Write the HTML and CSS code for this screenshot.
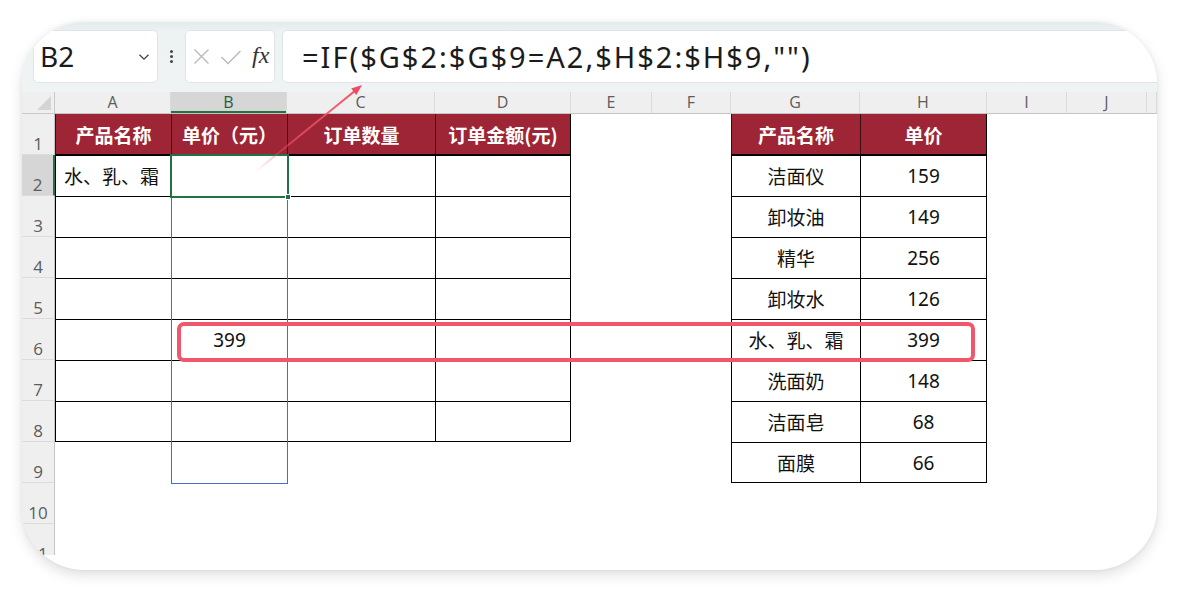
FILE: index.html
```html
<!DOCTYPE html>
<html lang="zh-CN">
<head>
<meta charset="utf-8">
<title>IF 数组公式</title>
<link rel="stylesheet" href="styles.css">
</head>
<body>
<div class="card">
  <div class="toolbar">
    <div class="namebox">
      <span class="nb-text">B2</span>
      <svg class="chev" width="12" height="8" viewBox="0 0 12 8"><path d="M1.5 1.8 L6 6.2 L10.5 1.8" fill="none" stroke="#444" stroke-width="1.3"/></svg>
    </div>
    <div class="dots"><i></i><i></i><i></i></div>
    <div class="fxbox">
      <svg width="17" height="17" viewBox="0 0 17 17"><path d="M1.5 1.5 L15.5 15.5 M15.5 1.5 L1.5 15.5" stroke="#b9b9b9" stroke-width="1.4" fill="none"/></svg>
      <svg width="22" height="18" viewBox="0 0 22 18"><path d="M1.5 9 L8 15.5 L20.5 3" stroke="#b9b9b9" stroke-width="1.4" fill="none"/></svg>
      <span class="fx">fx</span>
    </div>
    <div class="formula">=IF($G$2:$G$9=A2,$H$2:$H$9,"")</div>
  </div>

  <div class="sheet">
    <div class="grid">
      <!-- column headers -->
      <div class="corner"><svg width="14" height="14" viewBox="0 0 14 14"><path d="M14 0 L14 14 L0 14 Z" fill="#d4d4d4"/></svg></div>
      <div class="ch">A</div><div class="ch sel">B</div><div class="ch">C</div><div class="ch">D</div><div class="ch">E</div><div class="ch">F</div><div class="ch">G</div><div class="ch">H</div><div class="ch">I</div><div class="ch">J</div><div class="ch"></div>

      <!-- row 1 -->
      <div class="rh">1</div>
      <div class="c hd">产品名称</div><div class="c hd">单价（元）</div><div class="c hd">订单数量</div><div class="c hd tr">订单金额(元)</div>
      <div class="c"></div><div class="c"></div>
      <div class="c hd">产品名称</div><div class="c hd tr">单价</div>
      <div class="c"></div><div class="c"></div><div class="c"></div>

      <!-- row 2 -->
      <div class="rh on">2</div>
      <div class="c tb lt">水、乳、霜</div><div class="c tb"></div><div class="c tb"></div><div class="c tb tr"></div>
      <div class="c"></div><div class="c"></div>
      <div class="c tb">洁面仪</div><div class="c tb tr">159</div>
      <div class="c"></div><div class="c"></div><div class="c"></div>

      <!-- row 3 -->
      <div class="rh">3</div>
      <div class="c tb"></div><div class="c tb"></div><div class="c tb"></div><div class="c tb tr"></div>
      <div class="c"></div><div class="c"></div>
      <div class="c tb">卸妆油</div><div class="c tb tr">149</div>
      <div class="c"></div><div class="c"></div><div class="c"></div>

      <!-- row 4 -->
      <div class="rh">4</div>
      <div class="c tb"></div><div class="c tb"></div><div class="c tb"></div><div class="c tb tr"></div>
      <div class="c"></div><div class="c"></div>
      <div class="c tb">精华</div><div class="c tb tr">256</div>
      <div class="c"></div><div class="c"></div><div class="c"></div>

      <!-- row 5 -->
      <div class="rh">5</div>
      <div class="c tb"></div><div class="c tb"></div><div class="c tb"></div><div class="c tb tr"></div>
      <div class="c"></div><div class="c"></div>
      <div class="c tb">卸妆水</div><div class="c tb tr">126</div>
      <div class="c"></div><div class="c"></div><div class="c"></div>

      <!-- row 6 -->
      <div class="rh">6</div>
      <div class="c tb"></div><div class="c tb">399</div><div class="c tb"></div><div class="c tb tr"></div>
      <div class="c"></div><div class="c"></div>
      <div class="c tb">水、乳、霜</div><div class="c tb tr">399</div>
      <div class="c"></div><div class="c"></div><div class="c"></div>

      <!-- row 7 -->
      <div class="rh">7</div>
      <div class="c tb"></div><div class="c tb"></div><div class="c tb"></div><div class="c tb tr"></div>
      <div class="c"></div><div class="c"></div>
      <div class="c tb">洗面奶</div><div class="c tb tr">148</div>
      <div class="c"></div><div class="c"></div><div class="c"></div>

      <!-- row 8 -->
      <div class="rh">8</div>
      <div class="c tb bb"></div><div class="c tb bb"></div><div class="c tb bb"></div><div class="c tb tr bb"></div>
      <div class="c"></div><div class="c"></div>
      <div class="c tb">洁面皂</div><div class="c tb tr">68</div>
      <div class="c"></div><div class="c"></div><div class="c"></div>

      <!-- row 9 -->
      <div class="rh">9</div>
      <div class="c"></div><div class="c"></div><div class="c"></div><div class="c"></div>
      <div class="c"></div><div class="c"></div>
      <div class="c tb bb">面膜</div><div class="c tb tr bb">66</div>
      <div class="c"></div><div class="c"></div><div class="c"></div>

      <!-- row 10 -->
      <div class="rh">10</div>
      <div class="c"></div><div class="c"></div><div class="c"></div><div class="c"></div><div class="c"></div><div class="c"></div><div class="c"></div><div class="c"></div><div class="c"></div><div class="c"></div><div class="c"></div>

      <!-- row 11 -->
      <div class="rh">11</div>
      <div class="c"></div><div class="c"></div><div class="c"></div><div class="c"></div><div class="c"></div><div class="c"></div><div class="c"></div><div class="c"></div><div class="c"></div><div class="c"></div><div class="c"></div>
    </div>

    <div class="range"></div>
    <div class="active"></div>
    <div class="handle"></div>
    <div class="mark"></div>
  </div>

  <svg class="arrow" width="1135" height="548" viewBox="0 0 1135 548">
    <defs>
      <linearGradient id="ag" gradientUnits="userSpaceOnUse" x1="233" y1="150" x2="338" y2="65">
        <stop offset="0" stop-color="#f0566a" stop-opacity="0"/>
        <stop offset="0.45" stop-color="#f0566a" stop-opacity="0.75"/>
        <stop offset="1" stop-color="#ef4a60" stop-opacity="1"/>
      </linearGradient>
    </defs>
    <line x1="233" y1="150" x2="334" y2="68" stroke="url(#ag)" stroke-width="2"/>
    <path d="M340 63 L329.2 66.6 L334.3 72.9 Z" fill="#ef4a60"/>
  </svg>
</div>
</body>
</html>
```

FILE: styles.css
```css
* { box-sizing: border-box; }

html, body {
  margin: 0;
  padding: 0;
  background: #ffffff;
}

body {
  width: 1179px;
  height: 592px;
  overflow: hidden;
  font-family: "Noto Sans", "Noto Sans CJK SC", sans-serif;
}

.card {
  position: relative;
  margin: 22px 0 0 22px;
  width: 1135px;
  height: 548px;
  border-radius: 62px;
  overflow: hidden;
  background: #ffffff;
  box-shadow: 0 5px 14px rgba(0, 0, 0, 0.13), 0 0 4px rgba(0, 0, 0, 0.05);
}

/* ---------- formula toolbar ---------- */
.toolbar {
  height: 70px;
  display: flex;
  align-items: flex-start;
  padding: 8px 0 0 11px;
  background: linear-gradient(#e3ebed 0px, #edf2f3 10px, #eff3f3 100%);
}

.namebox {
  width: 125px;
  height: 53px;
  flex: none;
  background: #fff;
  border: 1px solid #dfe4e6;
  border-radius: 5px;
  display: flex;
  align-items: center;
  padding-left: 6px;
}

.nb-text {
  font-family: "Noto Sans", sans-serif;
  font-size: 28px;
  color: #1b1b1b;
  line-height: 38px;
  margin-top: -2px;
}

.chev {
  margin-left: auto;
  margin-right: 7px;
}

.dots {
  width: 27px;
  height: 53px;
  flex: none;
  display: flex;
  flex-direction: column;
  align-items: center;
  justify-content: center;
  gap: 2px;
}

.dots i {
  display: block;
  width: 3px;
  height: 3px;
  border-radius: 50%;
  background: #4a4a4a;
}

.fxbox {
  width: 90px;
  height: 53px;
  flex: none;
  background: #fff;
  border: 1px solid #dfe4e6;
  border-radius: 5px;
  display: flex;
  align-items: center;
  padding-left: 7px;
  gap: 10px;
}

.fx {
  font-family: "Liberation Serif", serif;
  font-style: italic;
  font-size: 24px;
  color: #333;
  margin-top: -3px;
}

.formula {
  flex: none;
  width: 900px;
  height: 53px;
  margin-left: 7px;
  background: #fff;
  border: 1px solid #dfe4e6;
  border-radius: 5px;
  padding-left: 19px;
  display: flex;
  align-items: center;
  font-family: "Noto Sans", sans-serif;
  font-size: 29px;
  letter-spacing: 2px;
  color: #1b1b1b;
  white-space: nowrap;
}

/* ---------- sheet ---------- */
.sheet {
  position: relative;
  height: 463px;
  overflow: hidden;
}

.grid {
  display: grid;
  grid-template-columns: 33px 116px 116px 148px 136px 81px 79px 129px 127px 80px 80px 1fr;
  grid-template-rows: 22px repeat(11, 41px);
}

.corner {
  background: #efefef;
  border-right: 1px solid #c9c9c9;
  border-bottom: 1px solid #c9c9c9;
  display: flex;
  align-items: flex-end;
  justify-content: flex-end;
  padding: 0 3px 3px 0;
}

.ch {
  background: #efefef;
  border-right: 1px solid #dadada;
  border-bottom: 1px solid #c4c4c4;
  display: flex;
  align-items: center;
  justify-content: center;
  font-family: "Open Sans", sans-serif;
  font-size: 16px;
  color: #5c5c5c;
  line-height: 21px;
}

.ch.sel {
  background: #d6d6d6;
  box-shadow: inset 0 -2px 0 #217346;
  color: #2d5a3e;
}

.rh {
  background: #efefef;
  border-right: 1px solid #c4c4c4;
  border-bottom: 1px solid #dcdcdc;
  display: flex;
  align-items: flex-end;
  justify-content: center;
  font-family: "Open Sans", sans-serif;
  font-size: 17px;
  color: #5c5c5c;
  line-height: 20px;
  padding-bottom: 0;
}

.rh.on {
  background: #d6d6d6;
  border-right: 2px solid #217346;
}

.c {
  display: flex;
  align-items: center;
  justify-content: center;
  font-size: 19px;
  color: #111;
  white-space: nowrap;
  font-family: "Noto Sans", "Noto Sans CJK SC", sans-serif;
}

.c.hd {
  background: #9e2535;
  color: #ffffff;
  font-weight: 700;
  border-left: 1px solid #3a0d12;
  border-bottom: 1px solid #000;
  font-family: "Noto Sans CJK SC", sans-serif;
}

.c.tb {
  border-left: 1px solid #000;
  border-top: 1px solid #000;
}

.c.tr { border-right: 1px solid #000; }
.c.bb { border-bottom: 1px solid #000; }

.c.lt {
  justify-content: flex-start;
  padding-left: 8px;
}

/* ---------- overlays ---------- */
.range {
  position: absolute;
  left: 149px;
  top: 63px;
  width: 117px;
  height: 329px;
  border: 1px solid #3f6fd0;
  pointer-events: none;
}

.active {
  position: absolute;
  left: 148px;
  top: 62px;
  width: 119px;
  height: 44px;
  border: 2px solid #217346;
}

.handle {
  position: absolute;
  left: 263px;
  top: 102px;
  width: 6px;
  height: 6px;
  background: #217346;
  border: 1px solid #ffffff;
}

.mark {
  position: absolute;
  left: 155px;
  top: 230px;
  width: 798px;
  height: 40px;
  border: 4px solid #f2566a;
  border-radius: 7px;
}

.arrow {
  position: absolute;
  left: 0;
  top: 0;
  pointer-events: none;
}
```
